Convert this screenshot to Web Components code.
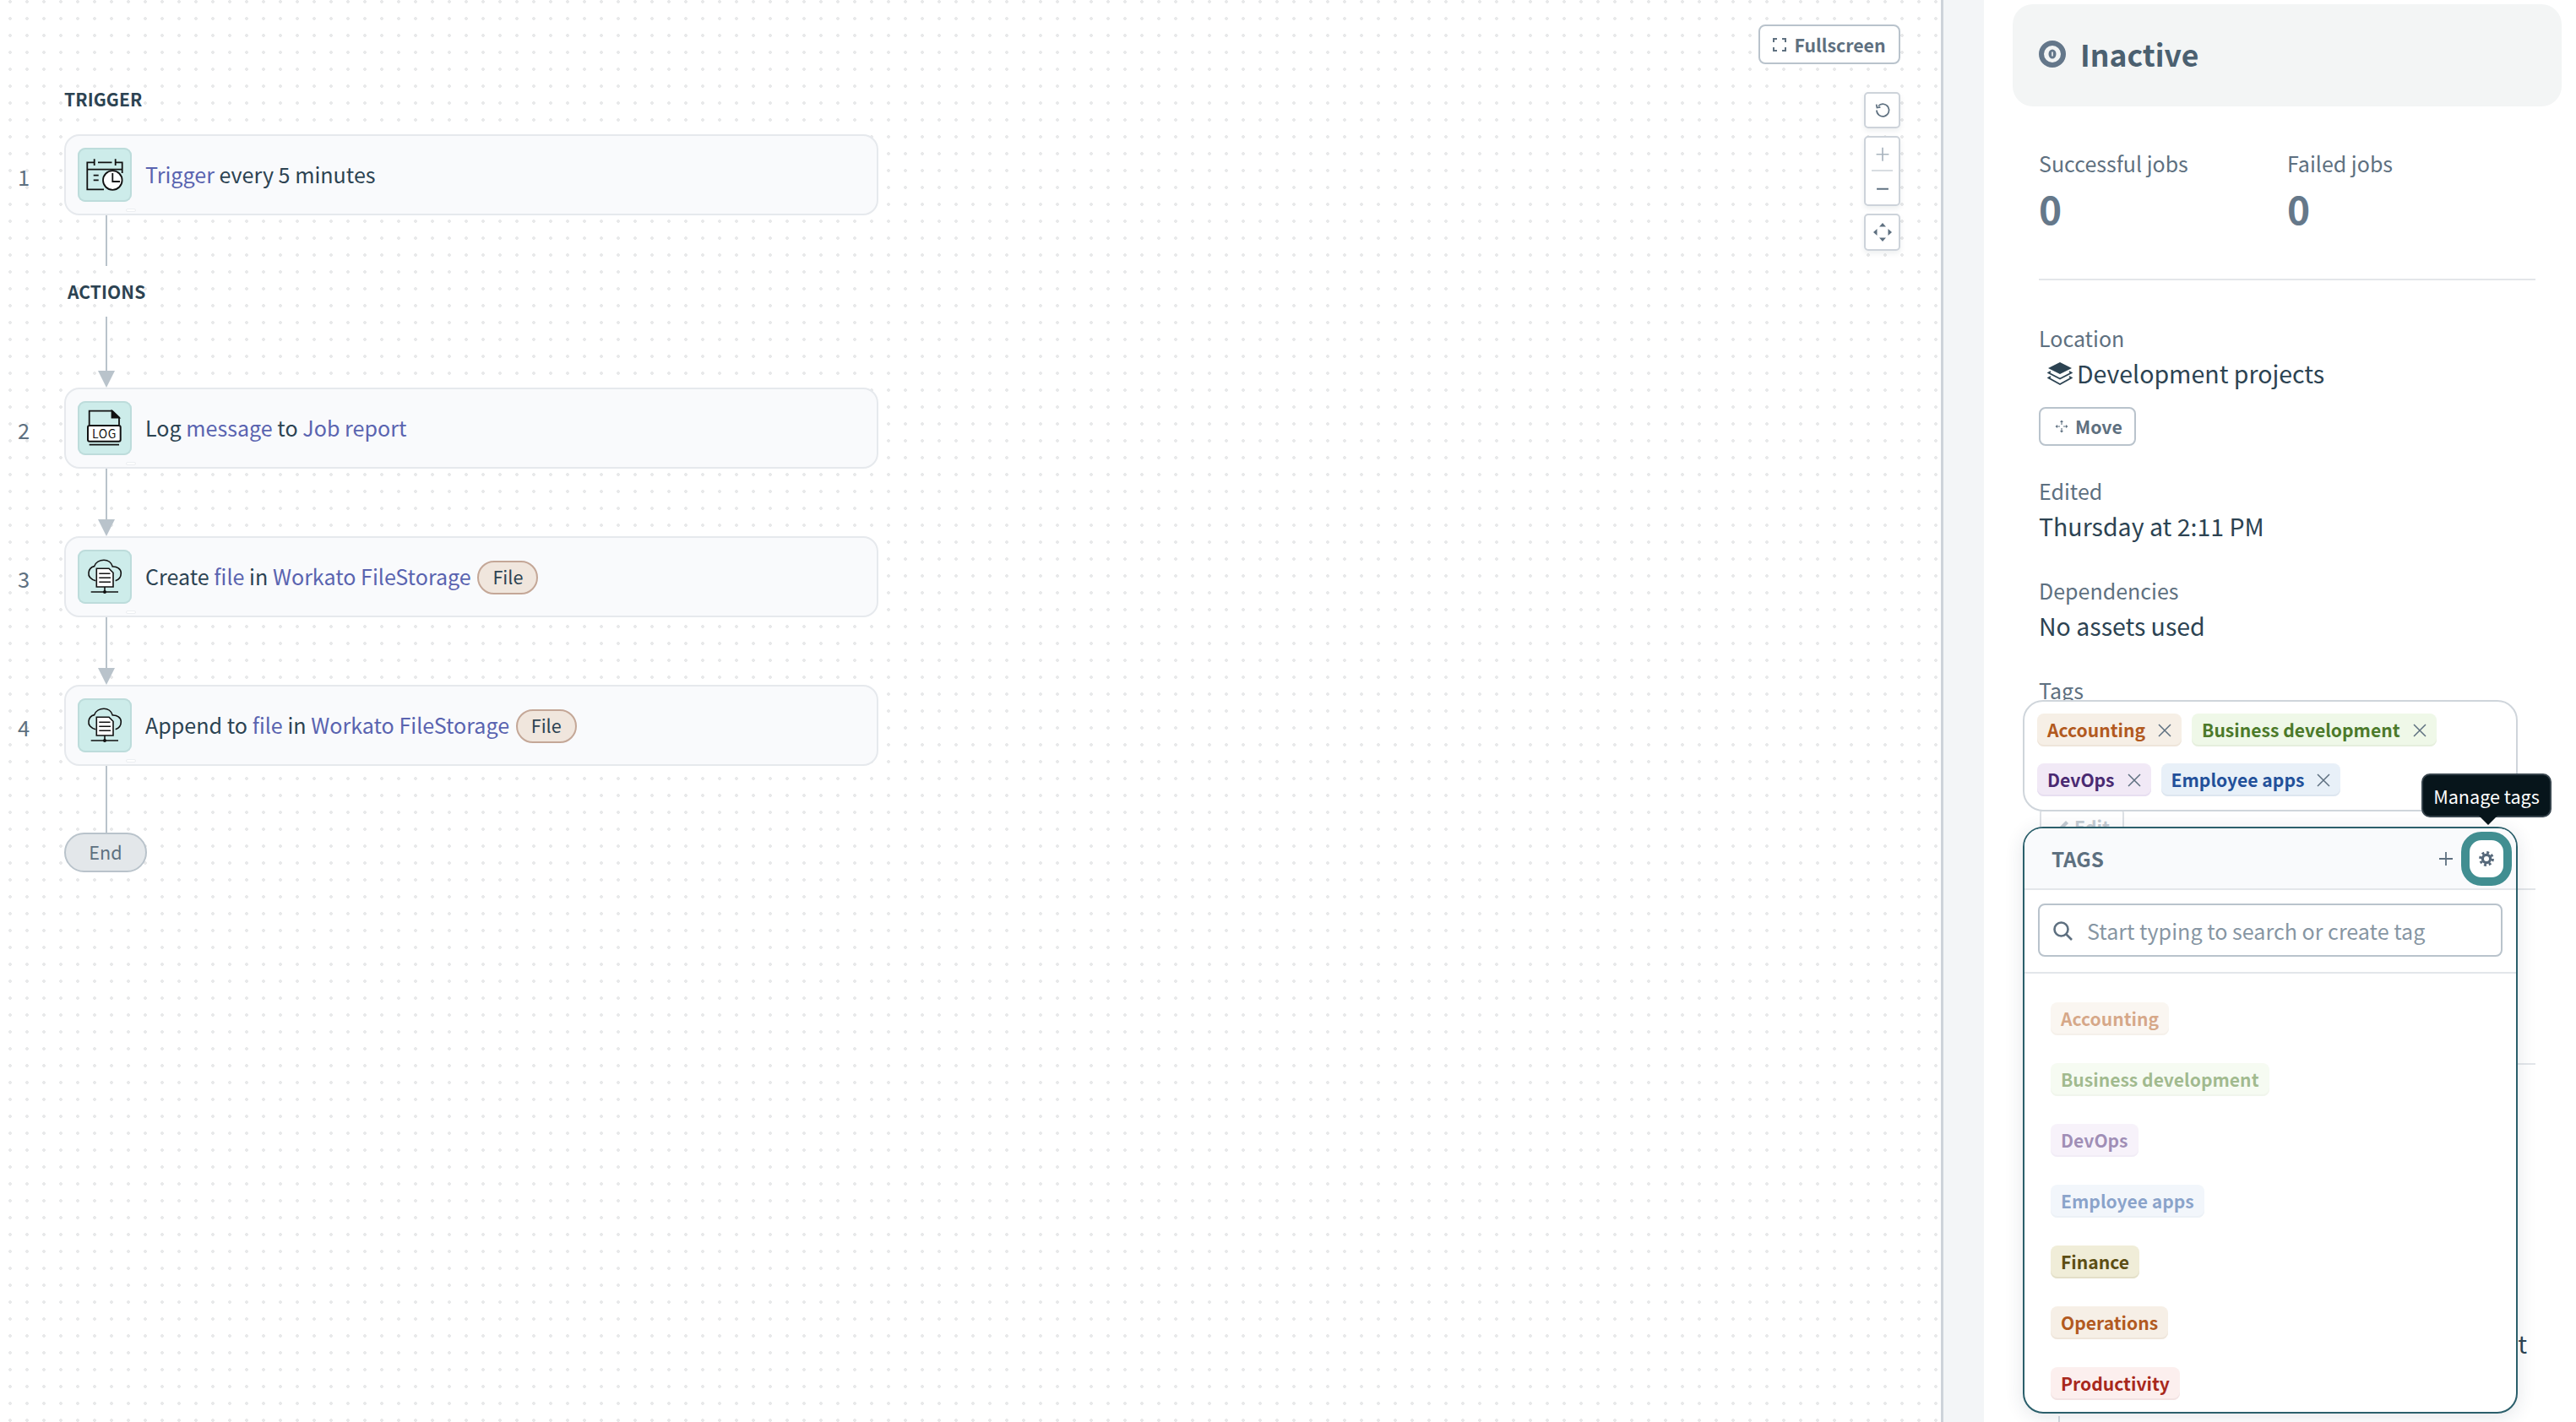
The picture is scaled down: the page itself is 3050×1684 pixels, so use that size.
<!DOCTYPE html>
<html lang="en">
<head>
<meta charset="utf-8">
<title>Recipe</title>
<style>
  html, body { margin: 0; padding: 0; height: 100%; overflow: hidden; background: #fff; }
  body { font-family: "Noto Sans CJK SC", "Noto Sans", sans-serif; color: #2c4352; }
</style>
</head>
<body>
<recipe-page>
  <recipe-canvas slot="canvas">
    <canvas-label>TRIGGER</canvas-label>
    <recipe-step num="1" icon="schedule">
      <step-link>Trigger</step-link> every 5 minutes
    </recipe-step>
    <step-connector size="60"></step-connector>
    <canvas-label center>ACTIONS</canvas-label>
    <step-connector size="84" arrow></step-connector>
    <recipe-step num="2" icon="log">
      Log <step-link>message</step-link> to <step-link>Job report</step-link>
    </recipe-step>
    <step-connector size="80" arrow></step-connector>
    <recipe-step num="3" icon="cloud">
      Create <step-link>file</step-link> in <step-link>Workato FileStorage</step-link> <file-pill>File</file-pill>
    </recipe-step>
    <step-connector size="80" arrow></step-connector>
    <recipe-step num="4" icon="cloud">
      Append to <step-link>file</step-link> in <step-link>Workato FileStorage</step-link> <file-pill>File</file-pill>
    </recipe-step>
    <step-connector size="79"></step-connector>
    <end-node>End</end-node>
  </recipe-canvas>

  <side-panel slot="panel">
    <status-card>Inactive</status-card>
    <job-stats></job-stats>
    <info-block label="Location">
      <location-value>Development projects</location-value>
      <move-button>Move</move-button>
    </info-block>
    <info-block label="Edited">Thursday at 2:11 PM</info-block>
    <info-block label="Dependencies">No assets used</info-block>
    <info-block label="Tags"></info-block>
    <tag-box>
      <tag-chip tone="orange" removable>Accounting</tag-chip>
      <tag-chip tone="green" removable>Business development</tag-chip>
      <tag-chip tone="purple" removable>DevOps</tag-chip>
      <tag-chip tone="blue" removable>Employee apps</tag-chip>
    </tag-box>
    <under-popup></under-popup>
    <tags-popup slot="popup">
      <tag-chip tone="orange" faded>Accounting</tag-chip>
      <tag-chip tone="green" faded>Business development</tag-chip>
      <tag-chip tone="purple" faded>DevOps</tag-chip>
      <tag-chip tone="blue" faded>Employee apps</tag-chip>
      <tag-chip tone="yellow">Finance</tag-chip>
      <tag-chip tone="orange">Operations</tag-chip>
      <tag-chip tone="red">Productivity</tag-chip>
    </tags-popup>
  </side-panel>
</recipe-page>

<script>
// small helper, every element just gets a shadow root with css + markup
function define(name, css, html) {
  customElements.define(name, class extends HTMLElement {
    constructor() {
      super();
      this.attachShadow({ mode: 'open' });
      this.shadowRoot.innerHTML = `<style>${css}</style>${html}`;
    }
  });
}

const ICONS = {
  schedule: `<svg viewBox="0 0 64 64" width="64" height="64" fill="none" stroke="#111" stroke-width="1.8">
      <path d="M31 49.3H11.3V17.3H19.7M24 17.3H40.5M45 17.3H52.7V30M11.3 25.7H52.7"/>
      <path d="M19.7 13.3V21M44.7 13.3V21M18.7 32.7H24.7M18.7 38.3H24.7"/>
      <circle cx="41.3" cy="38.5" r="11.3" fill="#fff"/>
      <path d="M41.3 30V40H50"/>
    </svg>`,
  log: `<svg viewBox="0 0 64 64" width="64" height="64" fill="none" stroke="#111" stroke-width="1.8">
      <path d="M13.7 28.3V11.7H41L49 19.5V28.3"/>
      <path d="M40.5 11.7L49 19.5H40.5Z" fill="#111"/>
      <rect x="12" y="29" width="38.7" height="18.7" rx="2" fill="#fff" stroke-width="2"/>
      <text x="31.4" y="43.6" text-anchor="middle" font-size="14" letter-spacing=".6" fill="#111" stroke="none" font-family="'Noto Sans CJK SC', sans-serif">LOG</text>
      <path d="M13.7 51.7H49"/>
    </svg>`,
  cloud: `<svg viewBox="0 0 64 64" width="64" height="64" fill="none" stroke="#111" stroke-width="1.6">
      <path d="M21.3 36.7C15.5 35.5 12.3 31.5 13 27C13.6 22.8 16.6 20.3 19.7 19.6C21.3 15 26 12.3 31 12.3C36 12.3 40 15.5 41.3 20C46.5 19.6 51.3 23 51.3 27.7C51.3 32 48.5 35.5 44.7 36.7"/>
      <path d="M22.3 44V22.3H37L42 27.3V44Z" fill="#fff"/>
      <path d="M25.3 28.3H38.5M25.3 33.3H39M25.3 38.3H39"/>
      <path d="M32 44V50M15.7 50H48"/>
      <circle cx="32" cy="50" r="1.2" fill="#111"/>
    </svg>`
};

define('recipe-page', `
  :host { display: flex; width: 3050px; height: 1684px; overflow: hidden; }
  .gutter { width: 48px; flex: none; background: #f3f5f7; border-left: 3px solid #cdd3da; }
`, `<slot name="canvas"></slot><div class="gutter"></div><slot name="panel"></slot>`);

define('recipe-canvas', `
  :host {
    display: flex; flex-direction: column; position: relative; flex: none;
    box-sizing: border-box; width: 2298px; height: 1684px;
    padding: 103px 0 0 76px;
    background-color: #fff;
    background-image: radial-gradient(circle, #e8e9ea 1.6px, transparent 2.2px);
    background-size: 20px 20px;
    background-position: 2px -8px;
  }
  .fullscreen {
    position: absolute; top: 29px; right: 48px; box-sizing: border-box; height: 47px; width: 168px;
    display: flex; align-items: center; justify-content: center; gap: 9px;
    background: #fff; border: 2px solid #b9c3cc; border-radius: 8px;
    font-size: 21.3px; font-weight: 600; color: #5e7080;
  }
  .controls { position: absolute; top: 109px; right: 48px; display: flex; flex-direction: column; gap: 9px; }
  .ctl {
    box-sizing: border-box; width: 43px; background: #fff;
    border: 2px solid #cdd3da; border-radius: 5px; box-shadow: 0 3px 6px rgba(30,50,70,.08);
    display: flex; flex-direction: column; align-items: center; justify-content: center;
  }
  svg { display: block; }
  hr { width: 25px; height: 2px; margin: 0; border: 0; background: #d8dde1; }
`, `
  <slot></slot>
  <div class="fullscreen">
    <svg width="16" height="16" viewBox="0 0 16 16" fill="none" stroke="#5e7080" stroke-width="2"><path d="M1 5V1H5M11 1H15V5M15 11V15H11M5 15H1V11"/></svg>
    Fullscreen
  </div>
  <div class="controls">
    <div class="ctl" style="height:43px">
      <svg width="20" height="20" viewBox="0 0 20 20" fill="none" stroke="#5e7080" stroke-width="1.7"><path d="M5 4.5A7.3 7.3 0 1 1 3 9.5"/><path d="M2.6 2.6L3.4 6.6L7.4 5.8" fill="none"/></svg>
    </div>
    <div class="ctl" style="height:83px;gap:0">
      <svg width="18" height="38" viewBox="0 0 18 38" fill="none" stroke="#a9b4be" stroke-width="1.7"><path d="M9 12V28M1.5 20H16.5"/></svg>
      <hr>
      <svg width="18" height="40" viewBox="0 0 18 40" fill="none" stroke="#5e7080" stroke-width="2"><path d="M2 21H16"/></svg>
    </div>
    <div class="ctl" style="height:44px">
      <svg width="26" height="26" viewBox="0 0 26 26" fill="#5e7080"><path d="M13 2L17 6.5H9ZM13 24L9 19.5H17ZM2 13L6.5 9V17ZM24 13L19.5 17V9Z"/></svg>
    </div>
  </div>
`);

define('canvas-label', `
  :host { display: block; height: 56px; line-height: 28px; font-size: 21px; font-weight: 600; color: #2c4352; letter-spacing: .1px; }
  :host([center]) { height: 60px; line-height: 60px; padding-left: 4px; }
`, `<slot></slot>`);

class RecipeStep extends HTMLElement {
  constructor() {
    super();
    this.attachShadow({ mode: 'open' });
    this.shadowRoot.innerHTML = `
      <style>
        :host { display: block; position: relative; width: 964px; font-size: 25.1px; color: #2c4352; }
        .num { position: absolute; left: -76px; width: 56px; top: 32px; text-align: center; font-size: 25.5px; line-height: 36px; color: #5e7080; }
        .card {
          position: relative; box-sizing: border-box; height: 96px; display: flex; align-items: center; gap: 16px;
          padding: 0 14px; background: #f9fafc; border: 2px solid #e6e9ed; border-radius: 18px;
        }
        .icon { flex: none; box-sizing: border-box; width: 64px; height: 64px; background: #cdecea; border-radius: 9px; box-shadow: inset 0 0 0 2px #bddcdb; }
        .icon svg { display: block; }
        .text { white-space: nowrap; position: relative; top: -1px; }
        .mark { position: absolute; left: 71px; bottom: 2px; width: 10px; height: 2px; background: #fff; border: 1px solid #eceff2; border-radius: 2px; }
      </style>
      <div class="num">${this.getAttribute('num')}</div>
      <div class="card">
        <div class="icon">${ICONS[this.getAttribute('icon')]}</div>
        <div class="text"><slot></slot></div>
        <div class="mark"></div>
      </div>`;
  }
}
customElements.define('recipe-step', RecipeStep);

define('step-link', `:host { color: #5a64b0; }`, `<slot></slot>`);

define('file-pill', `
  :host {
    display: inline-block; box-sizing: border-box; height: 40px; line-height: 34px; padding: 0 16px; margin: -6px 0 -6px 2px;
    font-size: 21.6px; color: #2c4352; background: #f0e6dd; border: 2px solid #c4a797; border-radius: 20px;
    vertical-align: 1px;
  }
`, `<slot></slot>`);

class StepConnector extends HTMLElement {
  constructor() {
    super();
    this.attachShadow({ mode: 'open' });
    const h = this.getAttribute('size');
    const arrow = this.hasAttribute('arrow')
      ? `<svg width="20" height="20" viewBox="0 0 20 20"><path d="M0 0H20L10 20Z" fill="#b9c3cb"/></svg>` : '';
    this.shadowRoot.innerHTML = `
      <style>
        :host { display: flex; flex-direction: column; align-items: center; width: 20px; margin-left: 40px; height: ${h}px; }
        .line { flex: 1; width: 2px; background: #b9c3cb; }
        svg { display: block; flex: none; }
      </style>
      <div class="line"></div>${arrow}`;
  }
}
customElements.define('step-connector', StepConnector);

define('end-node', `
  :host {
    display: block; box-sizing: border-box; width: 98px; height: 47px; line-height: 41px; text-align: center;
    font-size: 21.6px; color: #5e7080; background: #e3e7ea; border: 2px solid #b9c3cb; border-radius: 24px;
  }
`, `<slot></slot>`);

define('side-panel', `
  :host { display: block; position: relative; flex: 1; height: 1684px; background: #fff; overflow: hidden; }
  .flow { display: flex; flex-direction: column; padding-top: 5px; }
`, `<div class="flow"><slot></slot></div><slot name="popup"></slot>`);

define('status-card', `
  :host {
    display: flex; align-items: center; gap: 17px; box-sizing: border-box; height: 121px; margin: 0 17px 0 34px; padding: 0 0 3px 31px;
    background: #f3f5f5; border-radius: 24px; font-size: 35.5px; font-weight: 600; color: #4b6070; line-height: 1;
  }
  svg { display: block; flex: none; }
`, `
  <svg width="32" height="32" viewBox="0 0 32 32">
    <circle cx="16" cy="16" r="13" fill="none" stroke="#64778a" stroke-width="6"/>
    <ellipse cx="16" cy="16" rx="4.5" ry="5.5" fill="#64778a"/>
    <path d="M16 13.5V18.5" stroke="#f3f5f5" stroke-width="1.6"/>
  </svg>
  <span><slot></slot></span>
`);

define('job-stats', `
  :host { display: flex; margin: 49px 48px 0 65px; padding-bottom: 55px; border-bottom: 2px solid #e3e6ea; height: 100px; }
  div { width: 295px; }
  .l { display: block; font-size: 25px; line-height: 36px; color: #5e7080; }
  .v { display: block; font-size: 46px; line-height: 56px; margin-top: 7px; font-weight: 600; color: #65788a; }
`, `
  <div><span class="l">Successful jobs</span><span class="v">0</span></div>
  <div><span class="l">Failed jobs</span><span class="v">0</span></div>
`);

class InfoBlock extends HTMLElement {
  constructor() {
    super();
    this.attachShadow({ mode: 'open' });
    this.shadowRoot.innerHTML = `
      <style>
        :host { display: block; margin: 0 0 36px 65px; font-size: 28.5px; line-height: 44px; color: #2c4352; }
        :host([label="Location"]) { margin-top: 50px; margin-bottom: 35px; }
        .l { font-size: 25px; line-height: 36px; margin-bottom: 2px; color: #5e7080; }
      </style>
      <div class="l">${this.getAttribute('label')}</div>
      <slot></slot>`;
  }
}
customElements.define('info-block', InfoBlock);

define('location-value', `
  :host { display: flex; align-items: center; gap: 5px; padding-left: 10px; white-space: nowrap; }
  svg { display: block; flex: none; }
`, `
  <svg width="30" height="29" viewBox="0 0 30 29">
    <path d="M15 1L29 8L15 15L1 8Z" fill="#2c4352"/>
    <path d="M4 12L1.5 13.5L15 20.5L28.5 13.5L26 12M4 18L1.5 19.5L15 27L28.5 19.5L26 18" fill="none" stroke="#2c4352" stroke-width="1.8"/>
  </svg>
  <slot></slot>
`);

define('move-button', `
  :host {
    display: flex; align-items: center; gap: 8px; box-sizing: border-box; width: 115px; height: 46px; margin-top: 18px; padding-left: 17px;
    background: #fff; border: 2px solid #b9c3cc; border-radius: 8px;
    font-size: 21.3px; font-weight: 600; line-height: 1; color: #5e7080;
  }
  svg { display: block; flex: none; }
`, `
  <svg width="16" height="16" viewBox="0 0 16 16" fill="none" stroke="#5e7080" stroke-width="1.1">
    <path d="M8 3V6M8 10V13M3 8H6M10 8H13"/>
    <path d="M8 .5L10 3H6ZM8 15.5L6 13H10ZM.5 8L3 6V10ZM15.5 8L13 10V6Z" fill="#5e7080" stroke="none"/>
  </svg>
  <slot></slot>
`);

define('tag-box', `
  :host {
    display: flex; flex-wrap: wrap; align-content: flex-start; gap: 20px 12px; position: relative; z-index: 2;
    box-sizing: border-box; width: 586px; height: 132px; margin: -44px 0 0 46px; padding: 14px 15px 0;
    background: #fff; border: 2px solid #cfd5db; border-radius: 24px;
  }
`, `<slot></slot>`);

const TONES = {
  orange: ['#f6efe6', '#b25a1f', '#eee5da'],
  green: ['#eff8e8', '#4c7a2a', '#e5eedd'],
  purple: ['#f1e9f6', '#4a2a72', '#e7def0'],
  blue: ['#e8f0f8', '#22509a', '#dde6ef'],
  yellow: ['#f0edd8', '#5d4e14', '#e3dfc8'],
  red: ['#fcefee', '#a8281c', '#f2e3e3']
};

class TagChip extends HTMLElement {
  constructor() {
    super();
    this.attachShadow({ mode: 'open' });
    const [bg, fg, edge] = TONES[this.getAttribute('tone')];
    const x = this.hasAttribute('removable')
      ? `<svg width="16" height="16" viewBox="0 0 16 16" fill="none" stroke="#5e7080" stroke-width="1.5"><path d="M1 1L15 15M15 1L1 15"/></svg>` : '';
    this.shadowRoot.innerHTML = `
      <style>
        :host {
          display: inline-flex; align-items: center; gap: 15px; box-sizing: border-box; height: 39px;
          padding: 0 12px; background: ${bg}; color: ${fg}; border-radius: 8px; box-shadow: inset 0 -2px 0 ${edge};
          font-size: 21.1px; font-weight: 600; line-height: 1; white-space: nowrap;
        }
        :host([faded]) { background: none; box-shadow: none; position: relative; color: ${fg}80; }
        :host([faded])::before { content: ''; position: absolute; inset: 0; background: ${bg}; box-shadow: inset 0 -2px 0 ${edge}; opacity: .55; border-radius: 8px; }
        span { position: relative; }
        svg { display: block; flex: none; }
      </style>
      <span><slot></slot></span>${x}`;
  }
}
customElements.define('tag-chip', TagChip);

// what stays visible around the popup: the edit button, rules, last text line
define('under-popup', `
  :host { display: block; }
  .edit {
    box-sizing: border-box; width: 100px; height: 46px; margin: -6px 0 0 66px; padding-left: 19px;
    display: flex; align-items: center; gap: 6px;
    border: 2px solid #dde1e5; border-radius: 8px; font-size: 21.3px; font-weight: 600; color: #c3cbd2;
  }
  .rule { height: 2px; margin-left: 65px; width: 588px; background: #e3e6ea; }
  .t { margin: 308px 58px 0 0; text-align: right; font-size: 28.5px; line-height: 44px; color: #2c4352; }
  .v { width: 2px; height: 40px; margin: 64px 0 0 88px; background: #d5dae0; }
`, `
  <div class="edit"><svg width="14" height="14" viewBox="0 0 14 14"><path d="M2 12L3 8L10 1L13 4L6 11Z" fill="#c3cbd2"/></svg>Edit</div>
  <div class="rule" style="margin-top:51px"></div>
  <div class="rule" style="margin-top:205px"></div>
  <div class="t">t</div>
  <div class="v"></div>
`);

define('tags-popup', `
  :host {
    position: absolute; left: 46px; top: 979px; z-index: 5; box-sizing: border-box; width: 586px; height: 695px;
    display: flex; flex-direction: column; background: #fff; border: 2px solid #2b5f6b; border-radius: 24px;
    box-shadow: 0 4px 22px rgba(30,50,70,.12);
  }
  header {
    display: flex; align-items: center; box-sizing: border-box; height: 73px; padding: 0 5px 0 32px; flex: none;
    background: #f9fafc; border-bottom: 2px solid #e3e6ea; border-radius: 21px 21px 0 0;
    font-size: 24.3px; font-weight: 600; color: #5e7080;
  }
  .title { flex: 1; }
  .plus { display: block; margin-right: 10px; }
  .gear {
    position: relative; box-sizing: border-box; width: 60px; height: 64px; flex: none; display: flex; align-items: center; justify-content: center;
    background: #fff; border: 10px solid #418e91; border-radius: 24px;
  }
  .tip {
    position: absolute; left: 470px; top: -65px; box-sizing: border-box; width: 154px; height: 52px;
    display: flex; align-items: center; justify-content: center;
    background: #07151b; border: 2px solid #37444d; border-radius: 10px; color: #fff; font-size: 21.6px; font-weight: 400;
  }
  .tip::after {
    content: ''; position: absolute; left: 66px; bottom: -11px; width: 0; height: 0;
    border: 11px solid transparent; border-bottom: 0; border-top-color: #07151b;
  }
  .search { flex: none; box-sizing: border-box; height: 99px; padding: 16px 16px 0; border-bottom: 2px solid #e3e6ea; }
  .input {
    box-sizing: border-box; height: 63px; display: flex; align-items: center; gap: 17px; padding: 0 0 0 15px;
    border: 2px solid #b9c3cc; border-radius: 8px; font-size: 25.1px; color: #8796a3;
  }
  .list { display: flex; flex-direction: column; align-items: flex-start; gap: 33px; padding: 34px 0 0 31px; }
  svg { display: block; flex: none; }
`, `
  <header>
    <span class="title">TAGS</span>
    <svg class="plus" width="16" height="16" viewBox="0 0 16 16" fill="none" stroke="#5e7080" stroke-width="1.8"><path d="M8 0V16M0 8H16"/></svg>
    <div class="gear">
      <svg width="18" height="18" viewBox="0 0 18 18" fill="none" stroke="#56687a">
        <circle cx="9" cy="9" r="4.6" stroke-width="3.2"/>
        <circle cx="9" cy="9" r="7.4" stroke-width="3" stroke-dasharray="2.9 2.91"/>
      </svg>
    </div>
  </header>
  <div class="tip">Manage tags</div>
  <div class="search">
    <div class="input">
      <svg width="24" height="24" viewBox="0 0 24 24" fill="none" stroke="#5e7080" stroke-width="2.6"><circle cx="10.5" cy="10.5" r="8"/><path d="M16 16L23 23"/></svg>
      Start typing to search or create tag
    </div>
  </div>
  <div class="list"><slot></slot></div>
`);
</script>
</body>
</html>
